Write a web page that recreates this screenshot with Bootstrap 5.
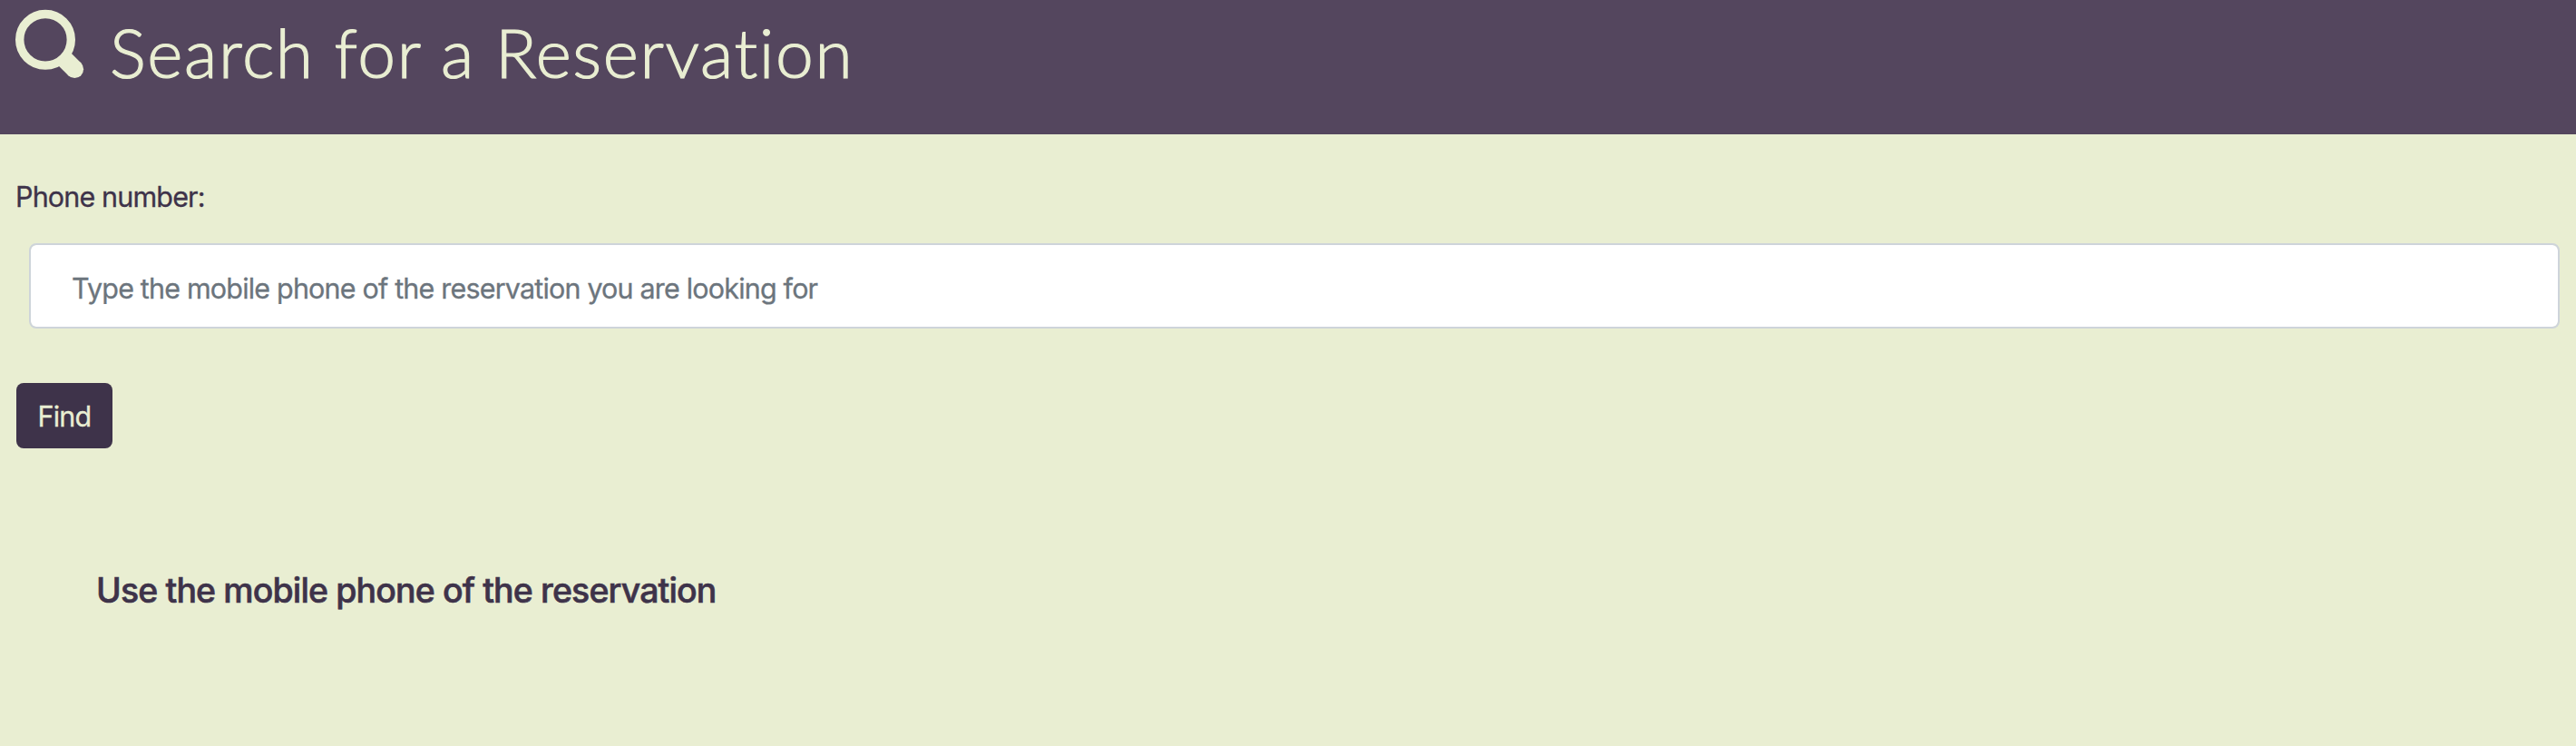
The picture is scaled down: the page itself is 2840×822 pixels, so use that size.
<!DOCTYPE html>
<html lang="en">
<head>
<meta charset="utf-8">
<meta name="viewport" content="width=device-width, initial-scale=1">
<title>Search for a Reservation</title>
<link href="https://cdn.jsdelivr.net/npm/bootstrap@5.3.0/dist/css/bootstrap.min.css" rel="stylesheet">
<style>
  body { background: #e9eed2; color: #3e334a; font-family: Inter, "Liberation Sans", sans-serif; font-size: 30.5px; line-height: 48px; letter-spacing: -.85px; }
  .page-head { background: #54465e; color: #e9eed2; height: 148px; padding-left: 16px; }
  .page-head svg { width: 78px; height: 78px; margin-top: 10px; }
  .page-head h1 { font: 300 75px/90px Lato, sans-serif; letter-spacing: 1.58px; -webkit-text-stroke: 1.2px currentColor; margin: 12px 0 0 27px; white-space: nowrap; }
  .search-form { padding: 45px 18px 0 18px; }
  .form-label { margin: 0 0 27px -1px; }
  .phone-input { margin-left: 14px; }
  .phone-input .form-control { height: 94px; border: 2px solid #ced4da; border-radius: 8px; padding: 4px 45px 0; font-size: 30.5px; letter-spacing: -.82px; color: #3e334a; }
  .phone-input .form-control::placeholder { color: #6c757d; }
  .btn-find { --bs-btn-bg: #3e334a; --bs-btn-color: #e9eed2; --bs-btn-hover-bg: #54465e; --bs-btn-hover-color: #e9eed2; width: 106px; height: 72px; margin-top: 60px; border: 0; border-radius: 8px; padding: 2px 0 0; font-size: 30.5px; line-height: 48px; letter-spacing: -.83px; }
  .phone-input .form-control, .form-label, .btn-find { -webkit-text-stroke: .3px currentColor; }
  .hint { margin: 133px 0 0 106px; font-size: 37.5px; font-weight: 500; -webkit-text-stroke: .6px currentColor; line-height: 48px; letter-spacing: -.88px; white-space: nowrap; }
</style>
</head>
<body>
<header class="page-head d-flex align-items-start">
  <svg viewBox="16 10 78 78" aria-hidden="true" fill="none" stroke="currentColor">
    <circle cx="50" cy="43.8" r="28.3" stroke-width="9.4"/>
    <path d="M71 65L82.3 76.3" stroke-width="19.6"/>
    <circle cx="82.3" cy="76.3" r="9.8" fill="currentColor" stroke="none"/>
  </svg>
  <h1>Search for a Reservation</h1>
</header>
<main>
  <form class="search-form">
    <label class="form-label d-block" for="phone">Phone number:</label>
    <div class="phone-input"><input class="form-control" id="phone" type="tel" placeholder="Type the mobile phone of the reservation you are looking for"></div>
    <button class="btn btn-find d-block" type="button">Find</button>
  </form>
  <h2 class="hint">Use the mobile phone of the reservation</h2>
</main>
<script src="https://cdn.jsdelivr.net/npm/bootstrap@5.3.0/dist/js/bootstrap.bundle.min.js"></script>
</body>
</html>
